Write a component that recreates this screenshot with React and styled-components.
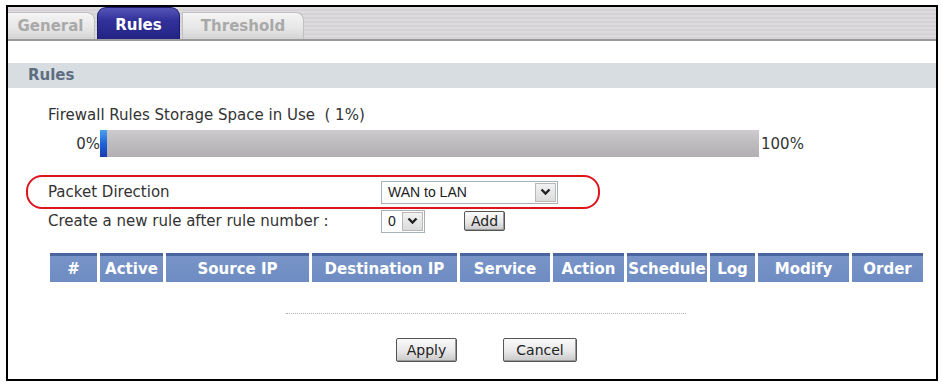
import React from 'react';
import styled, { createGlobalStyle } from 'styled-components';

const GlobalStyle = createGlobalStyle`
  body {
    margin: 0;
    background: #fff;
    font-family: "DejaVu Sans", Verdana, sans-serif;
  }
`;

const Frame = styled.div`
  margin: 5px 0 0 6px;
  width: 928px;
  height: 372px;
  border: 2px solid #000;
  display: flex;
  flex-direction: column;
  overflow: hidden;
`;

const TabBar = styled.div`
  height: 32px;
  border-bottom: 2px solid #9a9a9a;
  background: repeating-linear-gradient(to bottom, #dddbdd 0, #dddbdd 2px, #d5d3d5 2px, #d5d3d5 4px);
  display: flex;
  align-items: flex-end;
  gap: 2px;
`;

const Tab = styled.div`
  height: ${p => (p.$active ? '32px' : '27px')};
  width: ${p => p.$w}px;
  margin-left: ${p => p.$ml || 0}px;
  box-sizing: border-box;
  display: flex;
  align-items: center;
  justify-content: center;
  font-size: 15px;
  font-weight: bold;
  color: ${p => (p.$active ? '#fff' : '#a9a9a9')};
  background: ${p =>
    p.$active
      ? 'linear-gradient(to bottom, #5656b8 0%, #31319a 40%, #232384 100%)'
      : 'linear-gradient(to bottom, #f4f4f4 0%, #e6e6e6 60%, #d4d4d4 100%)'};
  border: 1px solid ${p => (p.$active ? '#1c1c6c' : '#c0c0c0')};
  border-bottom: none;
  border-radius: ${p => (p.$active ? '9px 9px 0 0' : '0 8px 0 0')};
  padding-top: ${p => (p.$active ? '2px' : '0')};
`;

const SectionHeader = styled.div`
  margin-top: 22px;
  height: 25px;
  line-height: 25px;
  background: #d7dde0;
  padding-left: 20px;
  font-size: 15px;
  font-weight: bold;
  color: #5e6e82;
`;

const Body = styled.div`
  padding-left: 40px;
  font-size: 15px;
  color: #333;
`;

const UsageLabel = styled.div`
  margin-top: 19px;
  line-height: 16px;
  white-space: pre;
`;

const BarRow = styled.div`
  margin-top: 7px;
  display: flex;
  align-items: center;
`;

const BarEnd = styled.span`
  width: ${p => p.$w}px;
  text-align: ${p => p.$align || 'left'};
  padding-left: ${p => p.$pl || 0}px;
  box-sizing: border-box;
`;

const Bar = styled.div`
  width: 659px;
  height: 27px;
  background: linear-gradient(to bottom, #cdcbcd 0%, #bdbbbd 50%, #b2b0b2 100%);
  display: flex;
`;

const BarFill = styled.div`
  height: 100%;
  background: linear-gradient(to bottom, #4aa0f0 0%, #1e64d8 50%, #1a3ab0 100%);
`;

const Callout = styled.div`
  margin: 18px 0 0 -22px;
  width: 574px;
  height: 34px;
  box-sizing: border-box;
  border: 2px solid #e0141c;
  border-radius: 16px;
  padding-left: 20px;
  display: flex;
  align-items: center;
`;

const FieldRow = styled.div`
  display: flex;
  align-items: center;
  height: ${p => p.$h || 23}px;
`;

const FieldLabel = styled.div`
  width: 333px;
  white-space: pre;
`;

const Select = styled.div`
  width: ${p => p.$w}px;
  height: 23px;
  box-sizing: border-box;
  border: 1px solid #a9b0b8;
  background: #fff;
  display: flex;
  align-items: stretch;
  font-family: "Liberation Sans", Arial, sans-serif;
  font-size: 14px;
  color: #222;
`;

const SelectText = styled.div`
  flex: 1;
  display: flex;
  align-items: center;
  padding-left: 6px;
`;

const SelectButton = styled.div`
  width: 21px;
  margin: 1px;
  box-sizing: border-box;
  border: 1px solid #b8b8b8;
  background: linear-gradient(to bottom, #f2f2f2 0%, #dcdcdc 100%);
  display: flex;
  align-items: center;
  justify-content: center;
`;

const Button = styled.div`
  width: ${p => p.$w}px;
  height: ${p => p.$h || 24}px;
  margin-left: ${p => p.$ml || 0}px;
  box-sizing: border-box;
  border: 1px solid #555;
  border-radius: 2px;
  background: linear-gradient(to bottom, #fafafa 0%, #e8e8e8 55%, #c8c8c8 100%);
  box-shadow: inset -1px -1px 0 #999;
  display: flex;
  align-items: center;
  justify-content: center;
  font-family: "DejaVu Sans", Tahoma, sans-serif;
  font-size: 14px;
  color: #222;
`;

const TableHead = styled.div`
  margin: 20px 0 0 2px;
  display: grid;
  grid-template-columns: 47px 63px 143px 145px 90px 71px 80px 45px 91px 71px;
  column-gap: 3px;
`;

const HeadCell = styled.div`
  height: 29px;
  box-sizing: border-box;
  border-top: 3px solid #4a64a0;
  background: linear-gradient(to bottom, #7894c8 0%, #6e8cc2 100%);
  color: #fff;
  font-weight: bold;
  font-size: 15px;
  display: flex;
  align-items: center;
  justify-content: center;
  white-space: nowrap;
  overflow: hidden;
`;

const Footer = styled.div`
  width: 875px;
  display: flex;
  flex-direction: column;
  align-items: center;
`;

const Dotted = styled.div`
  margin-top: 31px;
  width: 400px;
  border-top: 1px dotted #b0b0b0;
`;

const ButtonRow = styled.div`
  margin-top: 24px;
  display: flex;
  padding-left: 2px;
`;

function Chevron() {
  return (
    <svg width="11" height="8" viewBox="0 0 11 8">
      <path d="M1.5 1.5 L5.5 5.5 L9.5 1.5" fill="none" stroke="#222" strokeWidth="2.4" />
    </svg>
  );
}

const columns = ['#', 'Active', 'Source IP', 'Destination IP', 'Service', 'Action', 'Schedule', 'Log', 'Modify', 'Order'];

export default function App() {
  return (
    <>
      <GlobalStyle />
      <Frame>
        <TabBar>
          <Tab $w={89} $ml={-2}>General</Tab>
          <Tab $w={83} $active>Rules</Tab>
          <Tab $w={122}>Threshold</Tab>
        </TabBar>
        <SectionHeader>Rules</SectionHeader>
        <Body>
          <UsageLabel>Firewall Rules Storage Space in Use  ( 1%)</UsageLabel>
          <BarRow>
            <BarEnd $w={52} $align="right">0%</BarEnd>
            <Bar>
              <BarFill style={{ width: '1%' }} />
            </Bar>
            <BarEnd $w={50} $pl={2}>100%</BarEnd>
          </BarRow>
          <Callout>
            <FieldRow>
              <FieldLabel>Packet Direction</FieldLabel>
              <Select $w={177}>
                <SelectText>WAN to LAN</SelectText>
                <SelectButton><Chevron /></SelectButton>
              </Select>
            </FieldRow>
          </Callout>
          <FieldRow $h={24}>
            <FieldLabel>Create a new rule after rule number :</FieldLabel>
            <Select $w={44}>
              <SelectText>0</SelectText>
              <SelectButton><Chevron /></SelectButton>
            </Select>
            <Button $w={41} $h={20} $ml={39}>Add</Button>
          </FieldRow>
          <TableHead>
            {columns.map(c => (
              <HeadCell key={c}>{c}</HeadCell>
            ))}
          </TableHead>
          <Footer>
            <Dotted />
            <ButtonRow>
              <Button $w={61}>Apply</Button>
              <Button $w={74} $ml={46}>Cancel</Button>
            </ButtonRow>
          </Footer>
        </Body>
      </Frame>
    </>
  );
}
